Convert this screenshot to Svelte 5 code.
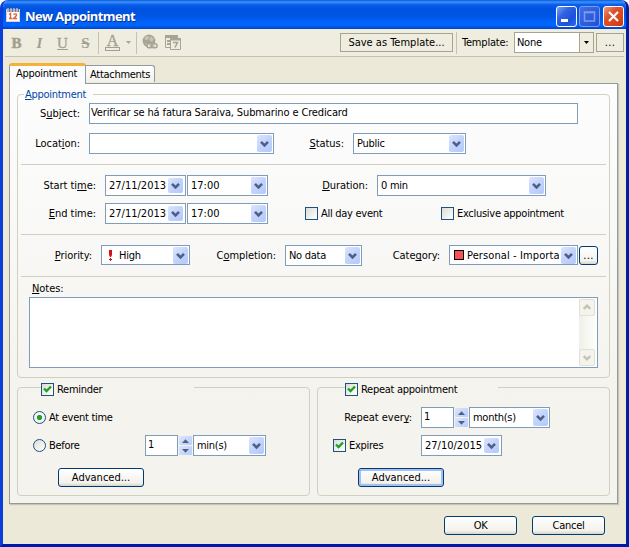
<script lang="ts">
  let subject = $state('Verificar se há fatura Saraiva, Submarino e Credicard');
  let notes = $state('');

  const times = [
    { before: 'Start ti', key: 'm', after: 'e:', date: '27/11/2013', time: '17:00' },
    { before: '', key: 'E', after: 'nd time:', date: '27/11/2013', time: '17:00' }
  ];
</script>

{#snippet label(before: string, key: string, after: string)}
  <span class="label">{before}<u>{key}</u>{after}</span>
{/snippet}

{#snippet chevron()}
  <span class="drop">
    <svg viewBox="0 0 15 15" width="15" height="15">
      <path d="M4 5.8l3.5 3.5L11 5.8" fill="none" stroke="#4d6185" stroke-width="2.6" />
    </svg>
  </span>
{/snippet}

{#snippet combo(text: string)}
  <div class="combo"><span class="text">{text}</span>{@render chevron()}</div>
{/snippet}

{#snippet check(text: string, checked: boolean)}
  <div class="check">
    <span class="box">
      {#if checked}
        <svg viewBox="0 0 11 11" width="11" height="11">
          <path d="M2 4.5L4.5 7L9 2.5" fill="none" stroke="#21a121" stroke-width="2.4" />
        </svg>
      {/if}
    </span>
    <span>{text}</span>
  </div>
{/snippet}

{#snippet radio(text: string, selected: boolean)}
  <div class="check">
    <span class="radio" class:selected></span>
    <span>{text}</span>
  </div>
{/snippet}

{#snippet spinner()}
  <span class="spinner">
    <span><svg viewBox="0 0 13 10" width="13" height="10"><path d="M3 7L6.5 3.2L10 7z" fill="#4d6185" /></svg></span>
    <span><svg viewBox="0 0 13 10" width="13" height="10"><path d="M3 3L6.5 6.8L10 3z" fill="#4d6185" /></svg></span>
  </span>
{/snippet}

<div class="window">
  <header class="titlebar">
    <svg class="app-icon" viewBox="0 0 14 14" width="14" height="14">
      <rect x="0.5" y="1.5" width="13" height="12" fill="#fff" stroke="#dccfd0" />
      <path d="M1 1h12v3H1z" fill="#7e7689" />
      <path d="M2 0v4M5 0v4M8 0v4M11 0v4" stroke="#f4eeee" />
      <path d="M3 6.5l1.5-1v5M3 10.5h3M7.5 6.5q3-1.5 3 .5q0 1-3 3.5h3.5" fill="none" stroke="#d8623b" stroke-width="1.4" />
    </svg>
    <h1>New Appointment</h1>
    <div class="controls">
      <span class="control">
        <svg viewBox="0 0 19 19" width="19" height="19"><path d="M4 12h7v3H4z" fill="#fff" /></svg>
      </span>
      <span class="control disabled">
        <svg viewBox="0 0 19 19" width="19" height="19"><path d="M4.5 5h10v9h-10zM4 5.5h11" fill="none" stroke="#7f9bf0" stroke-width="1.5" /></svg>
      </span>
      <span class="control close">
        <svg viewBox="0 0 19 19" width="19" height="19"><path d="M5 5l9 9M14 5l-9 9" stroke="#fff" stroke-width="2.2" /></svg>
      </span>
    </div>
  </header>

  <div class="toolbar">
    <span class="format bold">B</span>
    <span class="format italic">I</span>
    <span class="format underline">U</span>
    <span class="format strike">S</span>
    <span class="sep"></span>
    <span class="font-color"><b>A</b><i></i></span>
    <svg class="arrow" viewBox="0 0 5 3" width="5" height="3"><path d="M0 0h5L2.5 3z" fill="#a7a494" /></svg>
    <span class="sep"></span>
    <svg class="globe" viewBox="0 0 16 17" width="16" height="17">
      <circle cx="7" cy="7" r="6.4" fill="#a7a494" />
      <path d="M3 3q3-2 4 0t-3 3q-2 1-1-3M9 2l3 3-2 3-3-2zM3 9l3 1-1 2z" fill="#c6c3b5" />
      <rect x="5" y="9.8" width="5.5" height="4" rx="2" fill="#efeddf" stroke="#a7a494" stroke-width="1.5" />
      <rect x="9.6" y="9.8" width="5.5" height="4" rx="2" fill="#efeddf" stroke="#a7a494" stroke-width="1.5" />
      <path d="M7.5 11.8h5" stroke="#a7a494" stroke-width="1.2" />
    </svg>
    <svg class="calendar" viewBox="0 0 16 15" width="16" height="15">
      <path d="M0.5 0.5h12v12h-12z" fill="#efeddf" stroke="#a7a494" />
      <path d="M0 0h13v3H0zM2 5h3v2H2zM2 8h3v2H2z" fill="#a7a494" />
      <path d="M5.5 3.5h10v11h-10z" fill="#efeddf" stroke="#a7a494" />
      <path d="M5 3h11v2.5H5z" fill="#a7a494" />
      <path d="M8 7.5h4.5L10 12.5" fill="none" stroke="#a7a494" stroke-width="1.6" />
    </svg>
    <button class="flat save">Save as Template...</button>
    <span class="sep short"></span>
    <span class="template-label">Template:</span>
    <div class="flat-combo">
      <span class="value">None</span>
      <span class="flat-drop"><svg viewBox="0 0 5 3" width="5" height="3"><path d="M0 0h5L2.5 3z" /></svg></span>
    </div>
    <button class="flat more">...</button>
  </div>

  <nav class="tabs">
    <span class="tab active">Appointment</span>
    <span class="tab">Attachments</span>
  </nav>

  <main class="panel">
    <fieldset class="appointment">
      <legend><u>A</u>ppointment</legend>

      <div class="row subject">
        {@render label('S', 'u', 'bject:')}
        <input type="text" bind:value={subject} />
      </div>
      <div class="row location">
        {@render label('Locat', 'i', 'on:')}
        {@render combo('')}
        {@render label('', 'S', 'tatus:')}
        {@render combo('Public')}
      </div>
      <hr />

      {#each times as row, i}
        <div class="row {i === 0 ? 'start' : 'end'}">
          {@render label(row.before, row.key, row.after)}
          <div class="date">{@render combo(row.date)}</div>
          <div class="time">{@render combo(row.time)}</div>
          {#if i === 0}
            {@render label('', 'D', 'uration:')}
            {@render combo('0 min')}
          {:else}
            <span></span>
            {@render check('All day event', false)}
            {@render check('Exclusive appointment', false)}
          {/if}
        </div>
      {/each}
      <hr />

      <div class="row details">
        {@render label('', 'P', 'riority:')}
        <div class="combo low">
          <svg class="priority" viewBox="0 0 5 11" width="5" height="11">
            <path d="M1 0h3v5L3 7H2L1 5zM2 8h1v1h1v1H3v1H2v-1H1V9h1z" fill="#d41414" />
          </svg>
          <span class="text">High</span>
          {@render chevron()}
        </div>
        {@render label('C', 'o', 'mpletion:')}
        {@render combo('No data')}
        {@render label('Cate', 'g', 'ory:')}
        <div class="combo low category">
          <span class="swatch"></span>
          <span class="text">Personal - Important</span>
          {@render chevron()}
        </div>
        <button class="xp ellipsis">...</button>
      </div>
      <hr />

      <div class="notes-label"><u>N</u>otes:</div>
      <div class="notes">
        <textarea bind:value={notes}></textarea>
        <div class="scrollbar">
          <span><svg viewBox="0 0 15 15" width="14" height="15"><path d="M4 9l3.5-3.5L11 9" fill="none" stroke="#c5c3b8" stroke-width="2.4" /></svg></span>
          <span><svg viewBox="0 0 15 15" width="14" height="15"><path d="M4 6l3.5 3.5L11 6" fill="none" stroke="#c5c3b8" stroke-width="2.4" /></svg></span>
        </div>
      </div>
    </fieldset>

    <div class="groups">
      <fieldset class="group">
        <legend>{@render check('Reminder', true)}</legend>
        <div class="row indent">{@render radio('At event time', true)}</div>
        <div class="row before">
          {@render radio('Before', false)}
          <input type="text" value="1" />
          {@render spinner()}
          {@render combo('min(s)')}
        </div>
        <button class="xp advanced">Advanced...</button>
      </fieldset>

      <fieldset class="group repeat">
        <legend>{@render check('Repeat appointment', true)}</legend>
        <div class="row every">
          {@render label('Repeat ever', 'y', ':')}
          <input type="text" value="1" />
          {@render spinner()}
          {@render combo('month(s)')}
        </div>
        <div class="row expires">
          {@render check('Expires', true)}
          <div class="date">{@render combo('27/10/2015')}</div>
        </div>
        <button class="xp advanced focused">Advanced...</button>
      </fieldset>
    </div>
  </main>

  <footer>
    <button class="xp">OK</button>
    <button class="xp">Cancel</button>
  </footer>
</div>

<style>
  :global(body) {
    margin: 0;
    background: #fff;
  }

  .window,
  .window * {
    box-sizing: border-box;
  }

  .window {
    width: 629px;
    height: 547px;
    display: flex;
    flex-direction: column;
    border: solid #0831d9;
    border-width: 0 3px 3px;
    border-color: #0a3fdc #001ea0 #0019a8 #0a3fdc;
    border-radius: 8px 8px 0 0;
    background: #ece9d8;
    font: 11px/13px 'DejaVu Sans Condensed', 'DejaVu Sans', sans-serif;
    font-stretch: condensed;
    letter-spacing: -0.28px;
    color: #000;
    overflow: hidden;
  }

  button,
  input,
  textarea {
    font: inherit;
    letter-spacing: inherit;
    color: inherit;
    margin: 0;
    min-width: 0;
  }

  u {
    text-underline-offset: 1px;
    text-decoration-thickness: 1px;
    text-decoration-skip-ink: none;
  }

  /* title bar */
  .titlebar {
    height: 29px;
    flex: none;
    margin: 0 -3px;
    padding: 3px 5px 0 6px;
    display: flex;
    align-items: center;
    background: linear-gradient(#0a58d8 0, #3b92ff 7%, #0a5fea 16%, #0053e0 30%, #0055e5 55%, #0064fb 78%, #0064fb 88%, #0040c8 100%);
  }

  .app-icon {
    margin-top: -2px;
  }

  h1 {
    margin: -1px 0 0 5px;
    font: bold 13px/18px 'Open Sans', sans-serif;
    letter-spacing: -0.6px;
    color: #fff;
    text-shadow: 1px 1px #0b2f8c;
  }

  .controls {
    margin-left: auto;
    display: flex;
    gap: 2px;
  }

  .control {
    width: 21px;
    height: 21px;
    border: 1px solid #fff;
    border-radius: 3px;
    background: linear-gradient(135deg, #7ba2f5, #2f62e4 35%, #1d50da 70%, #2f6cf0);
  }

  .control.disabled {
    border-color: #7b9bee;
    background: linear-gradient(135deg, #3f6ee4, #1f51d4);
  }

  .control.close {
    margin-left: 1px;
    background: linear-gradient(135deg, #f09b80, #e0532d 35%, #d9451c 70%, #c63a10);
  }

  /* toolbar */
  .toolbar {
    height: 28px;
    flex: none;
    margin: 0 2px;
    padding: 3px 0 3px 6px;
    display: flex;
    align-items: center;
    border-bottom: 1px solid #c5c2b2;
    background: #efeddf;
  }

  .format {
    width: 11px;
    margin-right: 12px;
    font: 15px/16px 'Liberation Serif', serif;
    font-weight: bold;
    letter-spacing: 0;
    text-align: center;
    color: #a39f8e;
  }

  .bold {
    -webkit-text-stroke: 0.5px;
  }

  .italic {
    font-style: italic;
  }

  .underline {
    text-decoration: underline;
    font-weight: normal;
    -webkit-text-stroke: 0.3px;
  }

  .strike {
    margin-right: 7px;
    text-decoration: line-through;
  }

  .sep {
    width: 1px;
    height: 22px;
    background: #c5c2b2;
  }

  .sep.short {
    margin: 0 5px 0 3px;
  }

  .font-color {
    width: 15px;
    margin: 0 6px;
    display: flex;
    flex-direction: column;
    align-items: center;
    color: #a39f8e;
  }

  .font-color b {
    height: 12px;
    font: 16px/12px 'Liberation Serif', serif;
    -webkit-text-stroke: 0.3px;
  }

  .font-color i {
    width: 15px;
    height: 4px;
    border: 1px solid #a39f8e;
  }

  .arrow {
    margin-right: 5px;
  }

  .globe {
    margin-left: 5px;
  }

  .calendar {
    margin-left: 7px;
  }

  .flat {
    height: 19px;
    padding: 0;
    border: 1px solid #a7a391;
    background: #efeddf;
  }

  .save {
    width: 113px;
    margin-left: auto;
    letter-spacing: 0;
  }

  .template-label {
    width: 52px;
    letter-spacing: -0.2px;
  }

  .flat-combo {
    width: 80px;
    height: 21px;
    display: flex;
    border: 1px solid #a7a391;
    background: #fff;
  }

  .value {
    flex: 1;
    padding: 3px 2px;
  }

  .flat-drop {
    width: 14px;
    display: grid;
    place-items: center;
    border-left: 1px solid #a7a391;
    background: #efeddf;
  }

  .more {
    width: 28px;
    margin-left: 2px;
    letter-spacing: 0.4px;
  }

  /* tabs */
  .tabs {
    height: 26px;
    flex: none;
    padding: 0 6px;
    display: flex;
    align-items: flex-end;
  }

  .tab {
    width: 69px;
    height: 17px;
    margin-bottom: 1px;
    padding: 2px 0 0 4px;
    border: 1px solid #919b9c;
    border-width: 1px 1px 0 0;
    border-radius: 0 3px 0 0;
    background: linear-gradient(#fff, #f1f0ea);
    white-space: nowrap;
  }

  .tab.active {
    width: 77px;
    height: 21px;
    margin-bottom: -1px;
    padding: 1px 0 0 6px;
    border: 1px solid #919b9c;
    border-width: 3px 1px 0;
    border-top-color: #f3b23a;
    border-radius: 3px 3px 0 0;
    background: #fcfcfe;
    z-index: 1;
  }

  .panel {
    width: 609px;
    height: 421px;
    flex: none;
    margin-left: 6px;
    padding: 4px 7px 0;
    border: 1px solid #919b9c;
    background: linear-gradient(#fdfdfe, #f4f3ee 75%);
    box-shadow: 1px 1px 1px #c8c5b5;
  }

  fieldset {
    min-width: 0;
    margin: 0;
    border: 1px solid #d0d0bf;
    border-radius: 4px;
  }

  legend {
    padding: 0;
  }

  .appointment {
    width: 593px;
    height: 290px;
    padding: 2px 0 0;
  }

  .appointment legend {
    width: 69px;
    margin-left: 6px;
    padding-left: 1px;
    color: #0046a5;
  }

  hr {
    height: 1px;
    margin: 10px 3px;
    border: 0;
    background: #d0d0bf;
  }

  .row {
    height: 21px;
    display: grid;
    align-items: center;
    white-space: nowrap;
  }

  .subject {
    grid-template-columns: 71px 489px;
    margin-bottom: 9px;
  }

  .subject input {
    padding-left: 1px;
    letter-spacing: -0.13px;
  }

  .location {
    grid-template-columns: 71px 185px 79px 113px;
  }

  .start {
    grid-template-columns: 87px 82px 81px 109px 169px;
    margin-bottom: 7px;
  }

  .end {
    grid-template-columns: 87px 82px 81px 37px 136px 1fr;
  }

  .details {
    grid-template-columns: 83px 89px 95px 77px 87px 129px 20px;
  }

  .date {
    width: 81px;
    letter-spacing: 0;
  }

  .time {
    letter-spacing: 0;
  }

  .label {
    padding-right: 9px;
    letter-spacing: -0.05px;
    text-align: right;
  }

  input,
  .combo {
    width: 100%;
    height: 21px;
    border: 1px solid #7f9db9;
    border-radius: 0;
    background: #fff;
  }

  input {
    padding: 0 2px 2px;
    outline: 0;
  }

  .combo {
    padding: 0 1px 0 3px;
    display: flex;
    align-items: center;
  }

  .date .combo {
    padding-right: 2px;
  }

  .combo.low {
    height: 20px;
    margin-bottom: 1px;
  }

  .text {
    flex: 1;
    min-width: 0;
    overflow: hidden;
  }

  .category .text {
    margin-right: 2px;
    letter-spacing: 0.1px;
  }

  .drop {
    width: 15px;
    height: 17px;
    flex: none;
    padding-top: 1px;
    border-radius: 2px;
    background: linear-gradient(135deg, #dbe5fe, #c3d3fd 50%, #b4c8f8);
  }

  .date .drop {
    height: 15px;
    padding-top: 0;
  }

  .drop svg,
  .control svg,
  .spinner svg,
  .scrollbar svg,
  .box svg {
    display: block;
  }

  .priority {
    margin: 0 6px 0 3px;
  }

  .swatch {
    width: 10px;
    height: 10px;
    flex: none;
    margin: 0 3px 0 1px;
    border: 1px solid #000;
    background: #f95252;
  }

  .check {
    display: flex;
    align-items: center;
    gap: 3px;
    white-space: nowrap;
  }

  .box,
  .radio {
    width: 13px;
    height: 13px;
    flex: none;
    border: 1px solid #1c5180;
    background: linear-gradient(135deg, #dcdcd7, #fff);
  }

  .radio {
    border-radius: 50%;
  }

  .radio.selected {
    background: radial-gradient(circle, #21a121 0 2.2px, #f4f4f1 3px);
  }

  .xp {
    width: 73px;
    height: 19px;
    padding: 0 0 1px;
    border: 1px solid #003c74;
    border-radius: 3px;
    background: linear-gradient(#fff, #f3f2ed 80%, #d9d4c8);
  }

  .ellipsis {
    width: 19px;
    margin: 0 0 0 1px;
    letter-spacing: 0.4px;
  }

  .notes-label {
    margin: -5px 0 2px 14px;
    letter-spacing: -0.05px;
  }

  .notes {
    width: 569px;
    height: 71px;
    margin-left: 11px;
    padding: 1px;
    display: flex;
    border: 1px solid #7f9db9;
    background: #fff;
  }

  textarea {
    flex: 1;
    padding: 1px 2px;
    border: 0;
    outline: 0;
    resize: none;
    background: #fff;
  }

  .scrollbar {
    width: 17px;
    display: flex;
    flex-direction: column;
    justify-content: space-between;
    background: linear-gradient(90deg, #f0f0ea, #fdfdfb);
  }

  .scrollbar span {
    width: 16px;
    height: 17px;
    border: 1px solid #e2e0d4;
    border-radius: 2px;
    background: #f4f3ec;
  }

  /* reminder and repeat groups */
  .groups {
    display: flex;
    gap: 7px;
    margin-top: 1px;
  }

  .group {
    width: 293px;
    height: 117px;
    padding: 11px 0 0;
  }

  .group legend {
    width: 153px;
    height: 17px;
    margin-left: 23px;
    padding-top: 4px;
  }

  .repeat legend {
    margin-left: 27px;
  }

  .group .row {
    margin-bottom: 7px;
  }

  .indent {
    padding-left: 15px;
  }

  .before {
    padding-left: 15px;
    grid-template-columns: 112px 33px 15px 73px;
  }

  .every {
    grid-template-columns: 103px 33px 15px 81px;
  }

  .expires {
    padding-left: 15px;
    grid-template-columns: 88px 81px;
  }

  .spinner {
    width: 13px;
    margin-left: 1px;
    display: grid;
    gap: 1px;
  }

  .spinner span {
    height: 9px;
    overflow: hidden;
    border-radius: 1px;
    background: linear-gradient(135deg, #dbe5fe, #b9cbf9);
  }

  .advanced {
    display: block;
    width: 86px;
    margin-left: 40px;
    letter-spacing: 0;
  }

  .group .row + .advanced {
    margin-top: 12px;
  }

  .focused {
    box-shadow: inset 0 0 0 2px #a5c0f0;
  }

  footer {
    display: flex;
    justify-content: flex-end;
    gap: 15px;
    padding: 12px 21px 0 0;
  }
</style>
